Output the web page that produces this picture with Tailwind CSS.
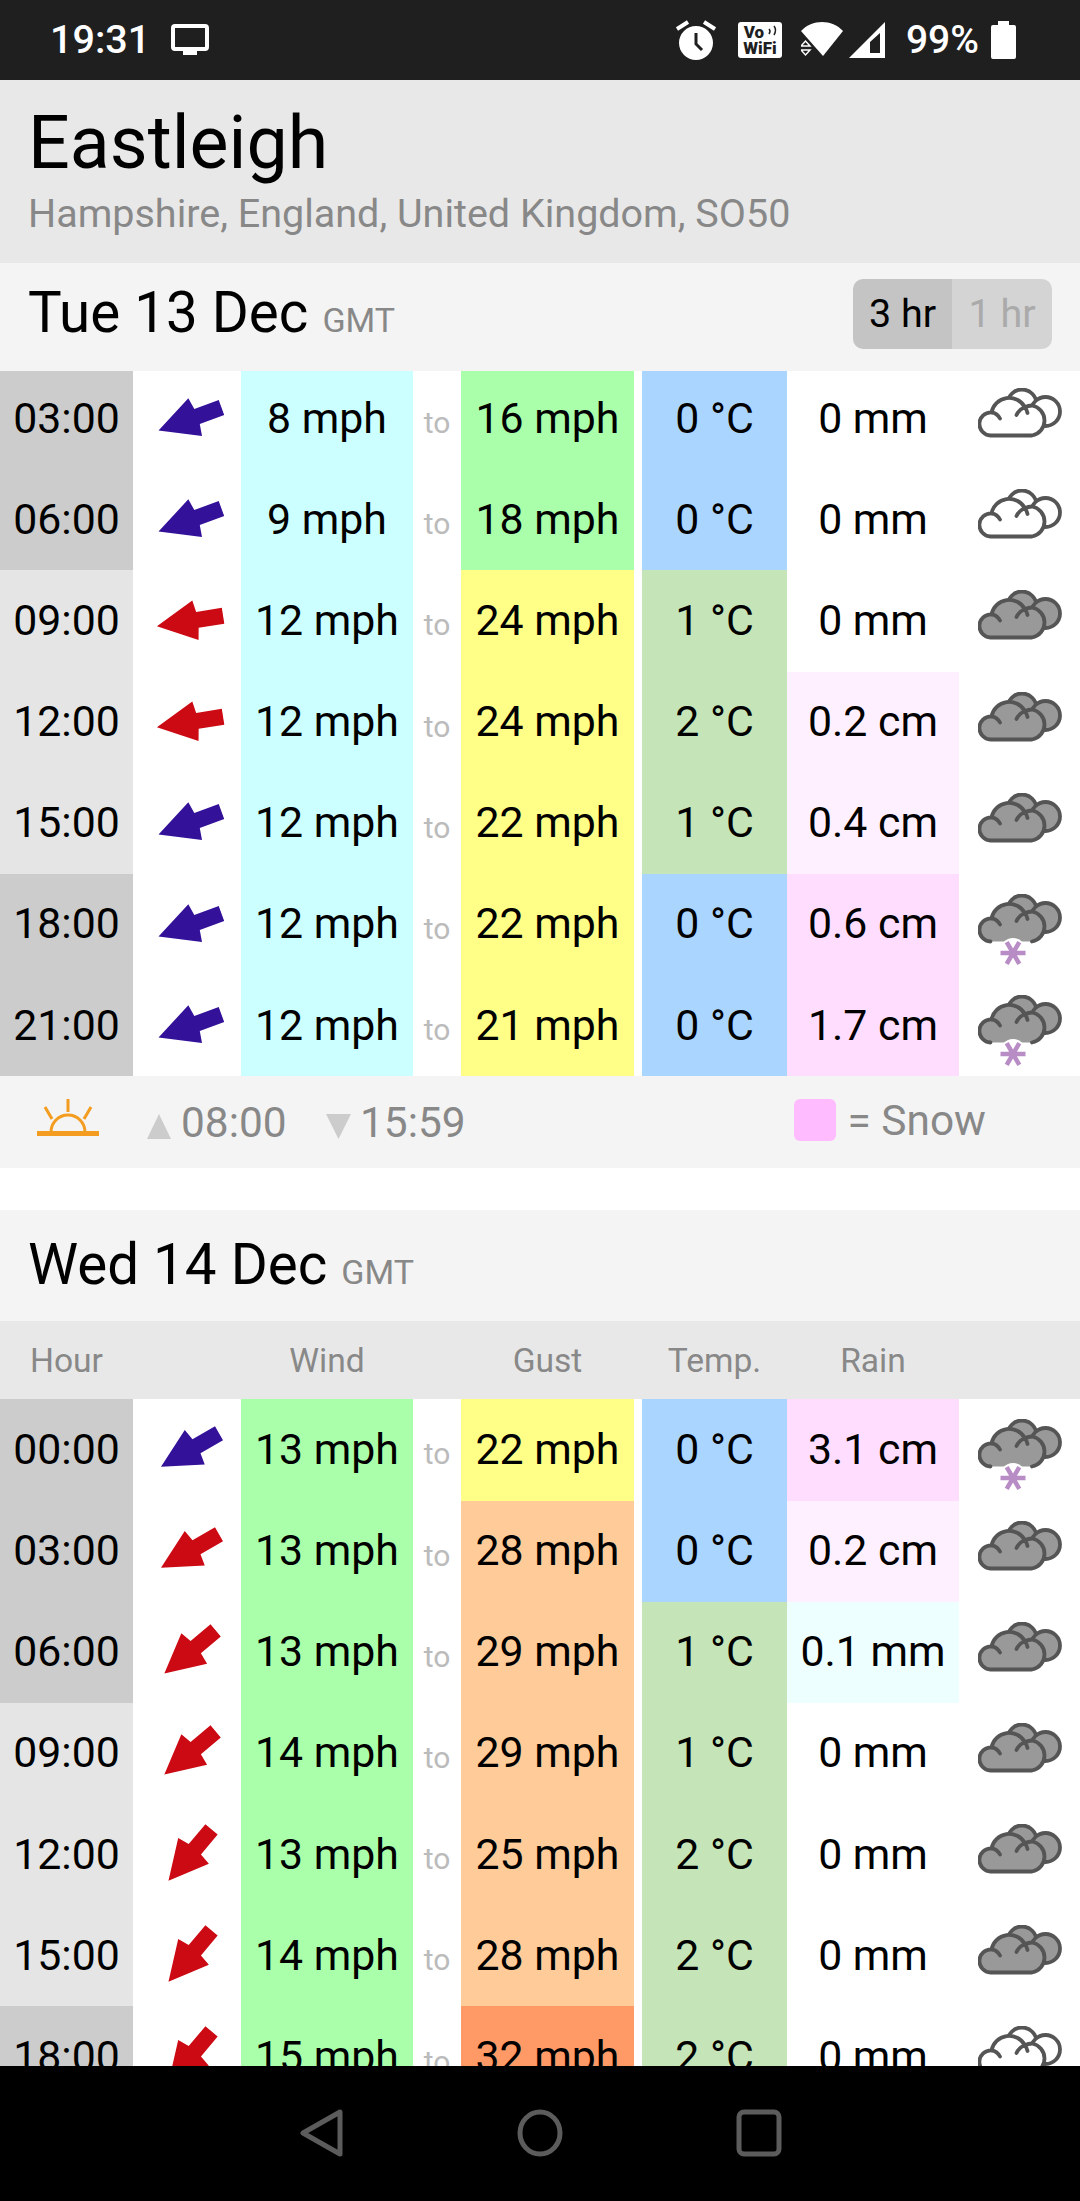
<!DOCTYPE html>
<html lang="en">
<head>
    <meta charset="UTF-8">
    <meta name="viewport" content="width=device-width, initial-scale=1.0">
    <title>Eastleigh Forecast</title>
    <script src="https://cdn.jsdelivr.net/npm/@tailwindcss/browser@4"></script>
</head>
<body class="bg-white font-[Roboto] antialiased">
<div class="flex h-[2201px] w-[1080px] flex-col overflow-hidden">

    <!-- Status bar -->
    <div class="flex h-[80px] shrink-0 items-center bg-[#1f1f1f] text-white">
        <span class="ml-[50px] text-[39.500px] font-medium">19:31</span>
        <svg class="ml-[21px]" width="38" height="32" viewBox="0 0 38 32" fill="none">
            <rect x="2" y="2" width="34" height="23" rx="2" stroke="#fff" stroke-width="4"/>
            <rect x="12" y="25" width="14" height="6" fill="#fff"/>
        </svg>
        <div class="ml-auto flex items-center">
            <!-- alarm -->
            <svg width="40" height="40" viewBox="0 0 40 40">
                <circle cx="20" cy="23" r="17" fill="#fff"/>
                <path d="M20 13v11l6 6" fill="none" stroke="#1f1f1f" stroke-width="3"/>
                <path d="M1 9 12 2M39 9 28 2" stroke="#fff" stroke-width="4"/>
            </svg>
            <!-- vowifi -->
            <div class="relative ml-[22px] flex h-[36px] w-[44px] flex-col items-center justify-center rounded-[3px] bg-white text-[17px] leading-[16px] font-black text-[#1f1f1f]">
                <span class="-ml-[12px]">Vo</span>
                <span>WiFi</span>
                <svg class="absolute top-[3px] right-[4px]" width="10" height="12" viewBox="0 0 10 12" fill="none" stroke="#1f1f1f" stroke-width="1.500"><path d="M1 4q2 2 0 5M6 1q3 4 0 9"/></svg>
            </div>
            <!-- wifi -->
            <svg class="ml-[19px]" width="42" height="36" viewBox="0 0 42 36">
                <path d="M0 9C11-3 31-3 42 9L22 34Z" fill="#fff"/>
                <path d="M0 24h9l-4.500-5ZM0 28h9l-4.500 5Z" fill="#1f1f1f" stroke="#fff" stroke-width="1.500"/>
            </svg>
            <!-- signal -->
            <svg class="ml-[5px]" width="38" height="38" viewBox="0 0 38 38">
                <path d="M1 37 37 1V37Z" fill="#fff"/>
                <path d="M22 21V32H32V12Z" fill="#1f1f1f"/>
            </svg>
            <span class="ml-[20px] text-[39px] font-medium">99%</span>
            <!-- battery -->
            <svg class="ml-[12px] mr-[64px]" width="25" height="38" viewBox="0 0 25 38">
                <path d="M7 0h11v4h5a2 2 0 0 1 2 2v30a2 2 0 0 1-2 2H2a2 2 0 0 1-2-2V6a2 2 0 0 1 2-2h5Z" fill="#fff"/>
            </svg>
        </div>
    </div>

    <!-- Page content -->
    <div class="min-h-0 flex-1 overflow-hidden">
        <header class="h-[183px] bg-[#e8e8e8] pl-[28px]">
            <h1 class="pt-[20px] text-[73.500px] leading-[86px] font-normal text-black">Eastleigh</h1>
            <p class="mt-[3px] text-[39.500px] leading-[50px] text-[#888]">Hampshire, England, United Kingdom, SO50</p>
        </header>

        <div class="relative z-10 -mb-[3px] flex h-[108px] items-center justify-between bg-[#f4f4f4] pl-[28px]">
            <h2 class="-mt-[8px] text-[56.500px] font-normal text-black">Tue 13 Dec <span class="text-[34px] text-[#888]">GMT</span></h2>
            <div class="mr-[28px] -mt-[6px] flex h-[70px] w-[199px] overflow-hidden rounded-[10px] text-[39.500px]">
                <span class="flex w-[99px] items-center justify-center bg-[#c4c4c4] text-black">3 hr</span>
                <span class="flex w-[100px] items-center justify-center bg-[#d4d4d4] text-[#aaa]">1 hr</span>
            </div>
        </div>
        <div id="day-one"></div>

        <div class="flex h-[92px] items-center bg-[#f4f4f4] pl-[37px] text-[42.400px] text-[#888]">
            <svg width="62" height="38" viewBox="0 0 62 38" fill="none" stroke="#f39c1f" stroke-width="3" class="-mt-[8px]">
                <path d="M14 33a17 17 0 0 1 34 0" />
                <path d="M0 34.500h62" stroke-width="5"/>
                <path d="M31 0v13M8 8l7 12M54 8l-7 12"/>
            </svg>
            <svg class="ml-[48px] mt-[8px]" width="24" height="25" viewBox="0 0 24 25"><path d="M12 0 24 25H0Z" fill="#ccc"/></svg>
            <span class="ml-[10px] w-[145px]">08:00</span>
            <svg class="mt-[8px]" width="25" height="25" viewBox="0 0 25 25"><path d="M0 0H25L12.500 25Z" fill="#ccc"/></svg>
            <span class="ml-[9px]">15:59</span>
            <span class="ml-[328px] -mt-[4px] h-[42px] w-[42px] rounded-[6px] bg-[#ffbbff]"></span>
            <span class="ml-[12px] -mt-[4px]">= Snow</span>
        </div>

        <div class="h-[42px] bg-white"></div>

        <div class="flex h-[111px] items-center bg-[#f4f4f4] pl-[28px]">
            <h2 class="-mt-[1px] text-[56.500px] font-normal text-black">Wed 14 Dec <span class="text-[34px] text-[#888]">GMT</span></h2>
        </div>
        <div class="grid h-[78px] grid-cols-[133px_108px_172px_48px_173px_8px_145px_172px_121px] items-center bg-[#e8e8e8] pt-[2px] text-center text-[33.600px] text-[#888]">
            <span>Hour</span><span></span><span>Wind</span><span></span><span>Gust</span><span></span><span>Temp.</span><span>Rain</span><span></span>
        </div>
        <div id="day-two"></div>
    </div>

    <!-- Android nav bar -->
    <div class="flex h-[135px] shrink-0 items-center justify-center gap-[173px] bg-black pb-[2px] pl-[2px]">
        <svg width="44" height="48" viewBox="0 0 44 48" fill="none" stroke="#5c5c5c" stroke-width="5" stroke-linejoin="round"><path d="M40 3V45L3 24Z"/></svg>
        <svg width="46" height="48" viewBox="0 0 46 48" fill="none" stroke="#5c5c5c" stroke-width="5"><ellipse cx="23" cy="24" rx="20" ry="21"/></svg>
        <svg width="46" height="48" viewBox="0 0 46 48" fill="none" stroke="#5c5c5c" stroke-width="5"><rect x="3" y="3" width="40" height="42" rx="5"/></svg>
    </div>
</div>

<script>
    // colours for each band, written out so the stylesheet picks them up
    const hourBg = { dark: 'bg-[#cccccc]', light: 'bg-[#e5e5e5]' };
    const speedBg = { calm: 'bg-[#ccffff]', green: 'bg-[#aaffaa]', yellow: 'bg-[#ffff88]', orange: 'bg-[#ffcc99]', deep: 'bg-[#ff9966]' };
    const tempBg = { cold: 'bg-[#aad5ff]', mild: 'bg-[#c5e5b8]' };
    const rainBg = { none: 'bg-white', drizzle: 'bg-[#eeffff]', snow: 'bg-[#fff0ff]', heavy: 'bg-[#ffddff]' };
    const arrowFill = { blue: '#331199', red: '#cc0a14' };

    const dayOne = [
        ['03:00', 'dark', 'blue', -20, '8 mph', 'calm', '16 mph', 'green', '0 °C', 'cold', '0 mm', 'none', 'clear'],
        ['06:00', 'dark', 'blue', -20, '9 mph', 'calm', '18 mph', 'green', '0 °C', 'cold', '0 mm', 'none', 'clear'],
        ['09:00', 'light', 'red', -9, '12 mph', 'calm', '24 mph', 'yellow', '1 °C', 'mild', '0 mm', 'none', 'grey'],
        ['12:00', 'light', 'red', -9, '12 mph', 'calm', '24 mph', 'yellow', '2 °C', 'mild', '0.2 cm', 'snow', 'grey'],
        ['15:00', 'light', 'blue', -20, '12 mph', 'calm', '22 mph', 'yellow', '1 °C', 'mild', '0.4 cm', 'snow', 'grey'],
        ['18:00', 'dark', 'blue', -20, '12 mph', 'calm', '22 mph', 'yellow', '0 °C', 'cold', '0.6 cm', 'heavy', 'snow'],
        ['21:00', 'dark', 'blue', -20, '12 mph', 'calm', '21 mph', 'yellow', '0 °C', 'cold', '1.7 cm', 'heavy', 'snow'],
    ];
    const dayTwo = [
        ['00:00', 'dark', 'blue', -30, '13 mph', 'green', '22 mph', 'yellow', '0 °C', 'cold', '3.1 cm', 'heavy', 'snow'],
        ['03:00', 'dark', 'red', -30, '13 mph', 'green', '28 mph', 'orange', '0 °C', 'cold', '0.2 cm', 'snow', 'grey'],
        ['06:00', 'dark', 'red', -40, '13 mph', 'green', '29 mph', 'orange', '1 °C', 'mild', '0.1 mm', 'drizzle', 'grey'],
        ['09:00', 'light', 'red', -40, '14 mph', 'green', '29 mph', 'orange', '1 °C', 'mild', '0 mm', 'none', 'grey'],
        ['12:00', 'light', 'red', -50, '13 mph', 'green', '25 mph', 'orange', '2 °C', 'mild', '0 mm', 'none', 'grey'],
        ['15:00', 'light', 'red', -50, '14 mph', 'green', '28 mph', 'orange', '2 °C', 'mild', '0 mm', 'none', 'grey'],
        ['18:00', 'dark', 'red', -50, '15 mph', 'green', '32 mph', 'deep', '2 °C', 'mild', '0 mm', 'none', 'clear'],
    ];

    function arrow(colour, angle) {
        return `<svg width="68" height="68" viewBox="-0.500 -34 68 68" style="transform: rotate(${angle}deg)">
            <path d="M0 0 39-20 41-8H67V8H41L39 20Z" fill="${arrowFill[colour]}"/></svg>`;
    }

    function cloud(type) {
        const fill = type === 'clear' ? '#fff' : '#999';
        // outline runs from the bottom right, over the three front lumps, back to the bottom left
        const outline = 'A15.250 15.250 0 0 0 54 17.500A15.250 15.250 0 0 0 47 19.300A18 18 0 0 0 13.500 24.300A11.600 11.600 0 1 0 12.500 47.500';
        // snow clouds have no bottom edge, the flake sits in a bite taken out of them
        const front = type === 'snow' ? 'M54 47.500' + outline : 'M12.500 47.500H54' + outline + 'Z';
        const flake = type === 'snow'
            ? `<circle cx="35" cy="57" r="13" fill="#fff" stroke="none"/>
               <path d="M22.500 59H47.500M28.700 48.200 41.300 69.800M41.300 48.200 28.700 69.800" stroke="#b88cc5" stroke-width="4.500" fill="none"/>`
            : '';
        return `<svg width="84" height="74" viewBox="0 0 84 74" fill="${fill}" stroke="#555" stroke-width="3.800">
            <circle cx="44" cy="16" r="14.500"/>
            <circle cx="67.500" cy="23.500" r="14.500"/>
            <path d="${front}" stroke-linecap="round"/>
            <path d="M13.500 24.300A11.600 11.600 0 0 1 22 30.500M47 19.300A15.250 15.250 0 0 0 38.500 27M47 19.300A18 18 0 0 1 49.500 25" fill="none" stroke-linecap="round"/>
            ${flake}
        </svg>`;
    }

    function renderRows(id, rows) {
        const cell = 'flex items-center justify-center';
        document.getElementById(id).innerHTML = rows.map(r => `
            <div class="grid h-[101.200px] grid-cols-[133px_108px_172px_48px_173px_8px_145px_172px_121px] text-[42.800px] text-black">
                <div class="${cell} pb-[2px] ${hourBg[r[1]]}">${r[0]}</div>
                <div class="${cell} pl-[6px]">${arrow(r[2], r[3])}</div>
                <div class="${cell} pb-[2px] ${speedBg[r[5]]}">${r[4]}</div>
                <div class="${cell} pt-[8px] text-[30px] text-[#bbb]">to</div>
                <div class="${cell} pb-[2px] ${speedBg[r[7]]}">${r[6]}</div>
                <div></div>
                <div class="${cell} pb-[2px] ${tempBg[r[9]]}">${r[8]}</div>
                <div class="${cell} pb-[2px] ${rainBg[r[11]]}">${r[10]}</div>
                <div class="flex items-start justify-center pt-[20px]">${cloud(r[12])}</div>
            </div>`).join('');
    }

    renderRows('day-one', dayOne);
    renderRows('day-two', dayTwo);
</script>
</body>
</html>
